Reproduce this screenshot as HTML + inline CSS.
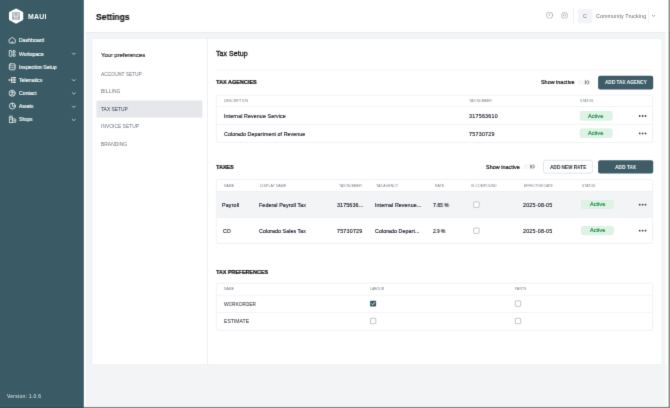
<!DOCTYPE html>
<html lang="en">
<head>
<meta charset="utf-8">
<title>Settings - Tax Setup</title>
<style>
*{box-sizing:border-box;margin:0;padding:0}
html,body{width:670px;height:408px;overflow:hidden;background:#f3f4f6;font-family:"Liberation Sans",Arial,sans-serif;color:#1f2937}
#app{position:relative;width:670px;height:408px;overflow:hidden;background:#f3f4f6}
#app>*{position:absolute}
#gfx{left:0;top:0}
#app{filter:url(#soft)}
.t{white-space:pre;z-index:5;will-change:transform}
</style>
</head>
<body>
<svg width="0" height="0" style="position:absolute"><filter id="soft" x="0" y="0" width="100%" height="100%" color-interpolation-filters="sRGB"><feConvolveMatrix order="3" kernelMatrix="0 1 0 1 7 1 0 1 0" divisor="11" edgeMode="duplicate" preserveAlpha="true"/></filter></svg>
<div id="app">
<svg id="gfx" width="670" height="408" viewBox="0 0 670 408">
  <!-- page background -->
  <rect x="0" y="0" width="670" height="408" fill="#f3f4f6"/>
  <!-- top bar -->
  <rect x="83.8" y="0" width="586.2" height="32.3" fill="#ffffff"/>
  <rect x="83.8" y="32.2" width="586.2" height=".7" fill="#e4e6ea"/>
  <!-- sidebar -->
  <rect x="83.800" y="0" width="1.900" height="406.900" fill="#ffffff"/>
  <rect x="0" y="0" width="83.8" height="408" fill="#3a5b65"/>
  <!-- card -->
  <rect x="92" y="38.5" width="569.8" height="326" rx="1.8" fill="#ffffff" stroke="#e8eaed" stroke-width=".5"/>
  <rect x="207.2" y="38.5" width=".65" height="326" fill="#e6e8eb"/>
  <!-- selected menu item -->
  <rect x="96.4" y="100.4" width="106" height="17.2" rx="1.5" fill="#e5e7eb"/>
  <!-- divider under Tax Setup -->
  <rect x="216" y="69.8" width="437" height=".6" fill="#eef0f2"/>

  <!-- table 1 -->
  <rect x="216.3" y="95.3" width="436.4" height="47.1" rx="1.8" fill="#ffffff" stroke="#e8eaed" stroke-width=".6"/>
  <rect x="216.6" y="106.4" width="435.8" height=".6" fill="#eceef1"/>
  <rect x="216.6" y="124.1" width="435.8" height=".6" fill="#eceef1"/>

  <!-- table 2 -->
  <rect x="216.3" y="179.6" width="436.4" height="63.9" rx="1.8" fill="#ffffff" stroke="#e8eaed" stroke-width=".6"/>
  <rect x="216.6" y="191.1" width="435.8" height="26.3" fill="#f3f4f6"/>
  <rect x="216.6" y="190.9" width="435.8" height=".6" fill="#eceef1"/>
  <rect x="216.6" y="217.2" width="435.8" height=".6" fill="#eceef1"/>

  <!-- table 3 -->
  <rect x="216.3" y="283.2" width="436.4" height="47" rx="1.8" fill="#ffffff" stroke="#e8eaed" stroke-width=".6"/>
  <rect x="216.6" y="294.8" width="435.8" height=".6" fill="#eceef1"/>
  <rect x="216.6" y="312.3" width="435.8" height=".6" fill="#eceef1"/>

  <!-- buttons -->
  <rect x="598.1" y="75.8" width="55.1" height="13.6" rx="2" fill="#3e5d67"/>
  <rect x="543.5" y="160.3" width="48.9" height="12.9" rx="2" fill="#ffffff" stroke="#cfd7da" stroke-width=".6"/>
  <rect x="598.1" y="160.2" width="55.1" height="13.4" rx="2" fill="#3e5d67"/>

  <!-- badges -->
  <rect x="579.7" y="111.0" width="33" height="9.8" rx="2.4" fill="#dcf3e5"/>
  <rect x="579.7" y="128.3" width="33" height="9.7" rx="2.4" fill="#dcf3e5"/>
  <rect x="580.9" y="200.1" width="33" height="9.0" rx="2.4" fill="#dcf3e5"/>
  <rect x="580.9" y="226.1" width="33" height="9.1" rx="2.4" fill="#dcf3e5"/>

  <!-- row menus -->
  <g fill="#323a45">
    <circle cx="639.7" cy="116.0" r=".88"/><circle cx="642.6" cy="116.0" r=".88"/><circle cx="645.5" cy="116.0" r=".88"/>
    <circle cx="639.7" cy="133.4" r=".88"/><circle cx="642.6" cy="133.4" r=".88"/><circle cx="645.5" cy="133.4" r=".88"/>
    <circle cx="639.7" cy="204.7" r=".88"/><circle cx="642.6" cy="204.7" r=".88"/><circle cx="645.5" cy="204.7" r=".88"/>
    <circle cx="639.7" cy="230.7" r=".88"/><circle cx="642.6" cy="230.7" r=".88"/><circle cx="645.5" cy="230.7" r=".88"/>
  </g>

  <!-- checkboxes -->
  <g fill="#ffffff" stroke="#a7adb6" stroke-width=".7">
    <rect x="473.700" y="202.000" width="5.400" height="5.400" rx=".7"/>
    <rect x="473.700" y="228.000" width="5.400" height="5.400" rx=".7"/>
    <rect x="370.400" y="318.300" width="5.400" height="5.400" rx=".7"/>
    <rect x="515.300" y="300.900" width="5.400" height="5.400" rx=".7"/>
    <rect x="515.300" y="318.300" width="5.400" height="5.400" rx=".7"/>
  </g>
  <rect x="370.100" y="300.700" width="6" height="5.700" rx=".9" fill="#3a5a64"/>
  <path d="M371.600 303.700 L372.700 304.800 L374.700 302.500" fill="none" stroke="#ffffff" stroke-width=".85" stroke-linecap="round" stroke-linejoin="round"/>

  <!-- toggles -->
  <g id="tg1"><rect x="577.4" y="79.8" width="12.2" height="5" rx="2.5" fill="#f6f7f8"/><path d="M584.9 80.8 A1.5 1.5 0 0 1 584.9 83.8 M584.9 82.3 h1" fill="none" stroke="#4b5563" stroke-width=".8"/><path d="M587.3 80.7 A1.65 1.65 0 0 1 587.3 84.0" fill="none" stroke="#4b5563" stroke-width=".75"/></g>
  <g id="tg2"><rect x="522.7" y="164.1" width="12.2" height="5" rx="2.5" fill="#f6f7f8"/><path d="M530.2 165.1 A1.5 1.5 0 0 1 530.2 168.1 M530.2 166.6 h1" fill="none" stroke="#4b5563" stroke-width=".8"/><path d="M532.6 164.9 A1.65 1.65 0 0 1 532.6 168.2" fill="none" stroke="#4b5563" stroke-width=".75"/></g>

  <!-- top bar right -->
  <svg x="546" y="11.650" width="7.200" height="7.200" viewBox="0 0 24 24" fill="none" stroke="#9499a2" stroke-width="2" stroke-linecap="round"><circle cx="12" cy="12" r="10.600"/><path d="M12.500 7v5.500h-3"/></svg>
  <svg x="560.900" y="11.650" width="7.200" height="7.200" viewBox="0 0 24 24" fill="none" stroke="#9499a2" stroke-width="2" stroke-linejoin="round"><path d="M12 1.500l3 2.400 3.800-.4 1 3.700 3.200 2-1.500 3.500 1.500 3.500-3.200 2-1 3.700-3.800-.4-3 2.400-3-2.400-3.800.4-1-3.700-3.200-2L3.500 12.700 2 9.200l3.200-2 1-3.700 3.800.4z"/><circle cx="12" cy="12" r="3.600"/></svg>
  <rect x="573.300" y="8.200" width=".6" height="15.600" fill="#e5e7eb"/>
  <rect x="577.900" y="8.800" width="14.500" height="14.400" rx="1.800" fill="#f3f4f7"/>
  <rect x="648.200" y="9.400" width=".6" height="13.200" fill="#e5e7eb"/>
  <path d="M652.300 15.300 L653.500 16.500 L654.700 15.300" fill="none" stroke="#6b7280" stroke-width=".6" stroke-linecap="round" stroke-linejoin="round"/>

  <!-- sidebar logo -->
  <path d="M16.100 9.900 L21.900 13.050 V19.100 L16.100 22.250 L10.300 19.100 V13.050 Z" fill="#ffffff" stroke="#ffffff" stroke-width="2.700" stroke-linejoin="round"/>
  <rect x="12.200" y="12.300" width="7.600" height="7.500" rx=".7" fill="#97a5aa"/>
  <path d="M13.400 13.700 h1.700 v1.700 h-1.700 z M16.900 13.700 h1.700 v1.700 h-1.700 z M13.300 16.600 h5.400 M14.500 16.600 v2.400 M16 16.600 v3 M17.500 16.600 v2.400" stroke="#ffffff" stroke-width=".6" fill="none"/>
  <!-- sidebar icons -->
  <g fill="none" stroke="#f3f7f8" stroke-width=".8" stroke-linejoin="round" stroke-linecap="round">
    <!-- dashboard -->
    <path d="M9.200 39.600 L12.250 37.400 L15.300 39.600 V42.300 Q15.300 43 14.600 43 H9.900 Q9.200 43 9.200 42.300 Z"/><path d="M12.250 42.800 v-1.300"/>
    <!-- workspace -->
    <rect x="9.300" y="50.700" width="2.500" height="5.600" rx=".5"/><rect x="13" y="50.700" width="2.200" height="2.100" rx=".5"/><rect x="13" y="54.200" width="2.200" height="2.100" rx=".5"/>
    <!-- inspection setup -->
    <rect x="9.300" y="63.800" width="5.900" height="6" rx="1.100"/><path d="M9.600 65.800 h5.300 M9.600 67.800 h5.300" stroke-width=".65"/>
    <!-- telematics -->
    <path d="M9.200 80 h2.500 M11.700 77.700 v4.600 M11.700 77.700 h1.200 M11.700 80 h1.200 M11.700 82.300 h1.200 M9.200 79.300 v1.400"/>
    <g fill="#f3f7f8" stroke="none"><rect x="13.300" y="77" width="2.300" height="1.400" rx=".2"/><rect x="13.300" y="79.300" width="2.300" height="1.400" rx=".2"/><rect x="13.300" y="81.600" width="2.300" height="1.400" rx=".2"/></g>
    <!-- contact -->
    <circle cx="12.150" cy="93.200" r="3.050"/><circle cx="12.150" cy="92.400" r="1"/><path d="M10.200 95.350 Q12.150 93.300 14.100 95.350"/>
    <!-- assets -->
    <circle cx="12.400" cy="106" r="3"/><path d="M12.400 103.200 V106.200 H15.200"/>
    <!-- shops -->
    <path d="M9.400 122.200 V116.600 Q9.400 116.100 9.900 116.100 H11.900 Q12.400 116.100 12.400 116.600 V122.200 Z"/><path d="M12.400 118.900 H15.200 Q15.700 118.900 15.700 119.400 V122.200 H12.400"/><path d="M10.500 117.600 h.8 M10.500 119.200 h.8 M13.800 120.500 h.6"/>
  </g>
  <!-- chevrons -->
  <g fill="none" stroke="#e6edef" stroke-width=".75" stroke-linecap="round" stroke-linejoin="round">
    <path d="M72.400 53.100 l1.400 1.400 l1.400 -1.400"/>
    <path d="M72.400 79.600 l1.400 1.400 l1.400 -1.400"/>
    <path d="M72.400 92.800 l1.400 1.400 l1.400 -1.400"/>
    <path d="M72.400 106.100 l1.400 1.400 l1.400 -1.400"/>
    <path d="M72.400 119.300 l1.400 1.400 l1.400 -1.400"/>
  </g>

  <!-- window edge -->
  <rect x="665.600" y="0" width="3" height="365" fill="#ffffff"/>
  <rect x="665.600" y="365" width="3" height="41.900" fill="#f8f9fa"/>
  <rect x="667.700" y="365" width=".9" height="41.900" fill="#ffffff"/>
  <rect x="83.800" y="406" width="584.100" height=".9" fill="#ffffff" opacity=".75"/>
  <rect x="668.600" y="0" width="1.400" height="408" fill="#000000" opacity=".45"/>
  <rect x="83.800" y="406.900" width="585" height="1.100" fill="#000000" opacity=".45"/>
  <rect x="0" y="406.900" width="83.800" height="1.100" fill="#000000" opacity=".1"/>
</svg>

<div class="t" style="left:28.00px;top:11.00px;font-size:6.9px;line-height:11.04px;font-weight:700;color:#ffffff;letter-spacing:0.297px;">MAUI</div>
<div class="t" style="left:18.90px;top:36.00px;font-size:5.2px;line-height:8.32px;font-weight:400;color:#f2f6f7;transform:scaleX(0.9886);transform-origin:0 0;-webkit-text-stroke:.18px #f2f6f7;">Dashboard</div>
<div class="t" style="left:18.90px;top:50.00px;font-size:5.2px;line-height:8.32px;font-weight:400;color:#f2f6f7;transform:scaleX(0.9474);transform-origin:0 0;-webkit-text-stroke:.18px #f2f6f7;">Workspace</div>
<div class="t" style="left:18.90px;top:63.00px;font-size:5.2px;line-height:8.32px;font-weight:400;color:#f2f6f7;transform:scaleX(0.9727);transform-origin:0 0;-webkit-text-stroke:.18px #f2f6f7;">Inspection Setup</div>
<div class="t" style="left:18.90px;top:76.00px;font-size:5.2px;line-height:8.32px;font-weight:400;color:#f2f6f7;transform:scaleX(0.9463);transform-origin:0 0;-webkit-text-stroke:.18px #f2f6f7;">Telematics</div>
<div class="t" style="left:18.90px;top:89.00px;font-size:5.2px;line-height:8.32px;font-weight:400;color:#f2f6f7;transform:scaleX(0.9782);transform-origin:0 0;-webkit-text-stroke:.18px #f2f6f7;">Contact</div>
<div class="t" style="left:18.90px;top:102.00px;font-size:5.2px;line-height:8.32px;font-weight:400;color:#f2f6f7;transform:scaleX(0.9115);transform-origin:0 0;-webkit-text-stroke:.18px #f2f6f7;">Assets</div>
<div class="t" style="left:18.90px;top:115.00px;font-size:5.2px;line-height:8.32px;font-weight:400;color:#f2f6f7;transform:scaleX(0.9172);transform-origin:0 0;-webkit-text-stroke:.18px #f2f6f7;">Shops</div>
<div class="t" style="left:7.00px;top:392.00px;font-size:5.0px;line-height:8.0px;font-weight:400;color:#e3eaec;letter-spacing:0.263px;">Version: 1.0.6</div>
<div class="t" style="left:96.00px;top:11.00px;font-size:8.7px;line-height:13.92px;font-weight:700;color:#0c0d10;transform:scaleX(0.9772);transform-origin:0 0;-webkit-text-stroke:.15px #0c0d10;">Settings</div>
<div class="t" style="left:583.40px;top:12.00px;font-size:5.2px;line-height:8.32px;font-weight:400;color:#6b7280;transform:scaleX(0.9067);transform-origin:0 0;">C</div>
<div class="t" style="left:595.70px;top:12.00px;font-size:5.3px;line-height:8.48px;font-weight:400;color:#626a76;letter-spacing:0.107px;">Community Trucking</div>
<div class="t" style="left:101.00px;top:50.00px;font-size:6.1px;line-height:9.76px;font-weight:400;color:#1a1d22;transform:scaleX(0.9548);transform-origin:0 0;-webkit-text-stroke:.14px #1a1d22;">Your preferences</div>
<div class="t" style="left:100.90px;top:71.00px;font-size:4.9px;line-height:7.84px;font-weight:400;color:#6b7280;transform:scaleX(0.9745);transform-origin:0 0;">ACCOUNT SETUP</div>
<div class="t" style="left:100.90px;top:88.00px;font-size:4.9px;line-height:7.84px;font-weight:400;color:#6b7280;letter-spacing:0.106px;">BILLING</div>
<div class="t" style="left:100.90px;top:106.00px;font-size:4.9px;line-height:7.84px;font-weight:400;color:#374151;transform:scaleX(0.9883);transform-origin:0 0;">TAX SETUP</div>
<div class="t" style="left:100.90px;top:123.00px;font-size:4.9px;line-height:7.84px;font-weight:400;color:#6b7280;letter-spacing:0.018px;">INVOICE SETUP</div>
<div class="t" style="left:100.90px;top:141.00px;font-size:4.9px;line-height:7.84px;font-weight:400;color:#6b7280;letter-spacing:0.039px;">BRANDING</div>
<div class="t" style="left:216.30px;top:48.00px;font-size:7.0px;line-height:11.2px;font-weight:400;color:#15171c;letter-spacing:0.070px;-webkit-text-stroke:.3px #15171c;">Tax Setup</div>
<div class="t" style="left:216.40px;top:78.00px;font-size:5.9px;line-height:9.44px;font-weight:700;color:#050608;transform:scaleX(0.9373);transform-origin:0 0;-webkit-text-stroke:.18px #050608;">TAX AGENCIES</div>
<div class="t" style="left:216.40px;top:163.00px;font-size:5.9px;line-height:9.44px;font-weight:700;color:#050608;transform:scaleX(0.9165);transform-origin:0 0;-webkit-text-stroke:.18px #050608;">TAXES</div>
<div class="t" style="left:216.40px;top:268.00px;font-size:5.9px;line-height:9.44px;font-weight:700;color:#050608;transform:scaleX(0.9095);transform-origin:0 0;-webkit-text-stroke:.18px #050608;">TAX PREFERENCES</div>
<div class="t" style="left:540.90px;top:78.00px;font-size:5.4px;line-height:8.64px;font-weight:400;color:#14161b;letter-spacing:0.028px;-webkit-text-stroke:.2px #14161b;">Show inactive</div>
<div class="t" style="left:486.20px;top:163.00px;font-size:5.4px;line-height:8.64px;font-weight:400;color:#14161b;letter-spacing:0.036px;-webkit-text-stroke:.2px #14161b;">Show inactive</div>
<div class="t" style="left:604.80px;top:78.00px;font-size:5.3px;line-height:8.48px;font-weight:700;color:#ffffff;transform:scaleX(0.8876);transform-origin:0 0;">ADD TAX AGENCY</div>
<div class="t" style="left:549.90px;top:163.00px;font-size:5.3px;line-height:8.48px;font-weight:700;color:#1c222b;transform:scaleX(0.8894);transform-origin:0 0;">ADD NEW RATE</div>
<div class="t" style="left:615.20px;top:163.00px;font-size:5.3px;line-height:8.48px;font-weight:700;color:#ffffff;transform:scaleX(0.9155);transform-origin:0 0;">ADD TAX</div>
<div class="t" style="left:223.90px;top:99.00px;font-size:3.5px;line-height:5.6px;font-weight:400;color:#7a808a;transform:scaleX(0.9991);transform-origin:0 0;">DESCRIPTION</div>
<div class="t" style="left:469.40px;top:99.00px;font-size:3.5px;line-height:5.6px;font-weight:400;color:#7a808a;letter-spacing:0.013px;">TAX NUMBER</div>
<div class="t" style="left:579.90px;top:99.00px;font-size:3.5px;line-height:5.6px;font-weight:400;color:#7a808a;transform:scaleX(0.9702);transform-origin:0 0;">STATUS</div>
<div class="t" style="left:223.90px;top:112.00px;font-size:5.3px;line-height:8.48px;font-weight:400;color:#171c26;letter-spacing:0.101px;-webkit-text-stroke:.14px #171c26;">Internal Revenue Service</div>
<div class="t" style="left:469.40px;top:112.00px;font-size:5.3px;line-height:8.48px;font-weight:400;color:#171c26;letter-spacing:0.273px;-webkit-text-stroke:.14px #171c26;">317563610</div>
<div class="t" style="left:223.90px;top:130.00px;font-size:5.3px;line-height:8.48px;font-weight:400;color:#171c26;letter-spacing:0.072px;-webkit-text-stroke:.14px #171c26;">Colorado Department of Revenue</div>
<div class="t" style="left:469.40px;top:130.00px;font-size:5.3px;line-height:8.48px;font-weight:400;color:#171c26;letter-spacing:0.275px;-webkit-text-stroke:.14px #171c26;">75730729</div>
<div class="t" style="left:223.90px;top:184.00px;font-size:3.5px;line-height:5.6px;font-weight:400;color:#7a808a;transform:scaleX(0.9975);transform-origin:0 0;">NAME</div>
<div class="t" style="left:260.30px;top:184.00px;font-size:3.5px;line-height:5.6px;font-weight:400;color:#7a808a;letter-spacing:0.068px;">DISPLAY NAME</div>
<div class="t" style="left:338.50px;top:184.00px;font-size:3.5px;line-height:5.6px;font-weight:400;color:#7a808a;letter-spacing:0.013px;">TAX NUMBER</div>
<div class="t" style="left:376.40px;top:184.00px;font-size:3.5px;line-height:5.6px;font-weight:400;color:#7a808a;transform:scaleX(0.9860);transform-origin:0 0;">TAX AGENCY</div>
<div class="t" style="left:434.80px;top:184.00px;font-size:3.5px;line-height:5.6px;font-weight:400;color:#7a808a;transform:scaleX(0.9914);transform-origin:0 0;">RATE</div>
<div class="t" style="left:471.10px;top:184.00px;font-size:3.5px;line-height:5.6px;font-weight:400;color:#7a808a;letter-spacing:0.051px;">IS COMPOUND</div>
<div class="t" style="left:524.40px;top:184.00px;font-size:3.5px;line-height:5.6px;font-weight:400;color:#7a808a;transform:scaleX(0.9825);transform-origin:0 0;">EFFECTIVE DATE</div>
<div class="t" style="left:582.30px;top:184.00px;font-size:3.5px;line-height:5.6px;font-weight:400;color:#7a808a;transform:scaleX(0.9777);transform-origin:0 0;">STATUS</div>
<div class="t" style="left:222.40px;top:201.00px;font-size:5.3px;line-height:8.48px;font-weight:400;color:#171c26;letter-spacing:0.166px;-webkit-text-stroke:.14px #171c26;">Payroll</div>
<div class="t" style="left:258.90px;top:201.00px;font-size:5.3px;line-height:8.48px;font-weight:400;color:#171c26;letter-spacing:0.097px;-webkit-text-stroke:.14px #171c26;">Federal Payroll Tax</div>
<div class="t" style="left:336.80px;top:201.00px;font-size:5.3px;line-height:8.48px;font-weight:400;color:#171c26;letter-spacing:0.139px;-webkit-text-stroke:.14px #171c26;">3175636...</div>
<div class="t" style="left:374.70px;top:201.00px;font-size:5.3px;line-height:8.48px;font-weight:400;color:#171c26;letter-spacing:0.085px;-webkit-text-stroke:.14px #171c26;">Internal Revenue...</div>
<div class="t" style="left:433.20px;top:201.00px;font-size:5.3px;line-height:8.48px;font-weight:400;color:#171c26;transform:scaleX(0.9576);transform-origin:0 0;-webkit-text-stroke:.14px #171c26;">7.65 %</div>
<div class="t" style="left:523.00px;top:201.00px;font-size:5.3px;line-height:8.48px;font-weight:400;color:#171c26;letter-spacing:0.232px;-webkit-text-stroke:.14px #171c26;">2025-08-05</div>
<div class="t" style="left:222.60px;top:227.00px;font-size:5.3px;line-height:8.48px;font-weight:400;color:#171c26;transform:scaleX(0.9807);transform-origin:0 0;-webkit-text-stroke:.14px #171c26;">CO</div>
<div class="t" style="left:258.90px;top:227.00px;font-size:5.3px;line-height:8.48px;font-weight:400;color:#171c26;letter-spacing:0.068px;-webkit-text-stroke:.14px #171c26;">Colorado Sales Tax</div>
<div class="t" style="left:336.80px;top:227.00px;font-size:5.3px;line-height:8.48px;font-weight:400;color:#171c26;letter-spacing:0.232px;-webkit-text-stroke:.14px #171c26;">75730729</div>
<div class="t" style="left:374.70px;top:227.00px;font-size:5.3px;line-height:8.48px;font-weight:400;color:#171c26;letter-spacing:0.072px;-webkit-text-stroke:.14px #171c26;">Colorado Depart...</div>
<div class="t" style="left:433.20px;top:227.00px;font-size:5.3px;line-height:8.48px;font-weight:400;color:#171c26;transform:scaleX(0.9080);transform-origin:0 0;-webkit-text-stroke:.14px #171c26;">2.9 %</div>
<div class="t" style="left:523.00px;top:227.00px;font-size:5.3px;line-height:8.48px;font-weight:400;color:#171c26;letter-spacing:0.232px;-webkit-text-stroke:.14px #171c26;">2025-08-05</div>
<div class="t" style="left:223.90px;top:287.00px;font-size:3.5px;line-height:5.6px;font-weight:400;color:#7a808a;transform:scaleX(0.9975);transform-origin:0 0;">NAME</div>
<div class="t" style="left:369.80px;top:287.00px;font-size:3.5px;line-height:5.6px;font-weight:400;color:#7a808a;transform:scaleX(0.9926);transform-origin:0 0;">LABOUR</div>
<div class="t" style="left:514.60px;top:287.00px;font-size:3.5px;line-height:5.6px;font-weight:400;color:#7a808a;letter-spacing:0.010px;">PARTS</div>
<div class="t" style="left:224.10px;top:300.00px;font-size:5.1px;line-height:8.16px;font-weight:400;color:#242b36;transform:scaleX(0.9314);transform-origin:0 0;">WORKORDER</div>
<div class="t" style="left:224.10px;top:317.00px;font-size:5.1px;line-height:8.16px;font-weight:400;color:#242b36;transform:scaleX(0.9963);transform-origin:0 0;">ESTIMATE</div>
<div class="t" style="left:588.40px;top:112.00px;font-size:5.5px;line-height:8.8px;font-weight:400;color:#2a8c4f;letter-spacing:0.043px;-webkit-text-stroke:.22px #2a8c4f;">Active</div>
<div class="t" style="left:588.40px;top:129.00px;font-size:5.5px;line-height:8.8px;font-weight:400;color:#2a8c4f;letter-spacing:0.043px;-webkit-text-stroke:.22px #2a8c4f;">Active</div>
<div class="t" style="left:589.80px;top:200.00px;font-size:5.5px;line-height:8.8px;font-weight:400;color:#2a8c4f;letter-spacing:0.043px;-webkit-text-stroke:.22px #2a8c4f;">Active</div>
<div class="t" style="left:589.80px;top:226.00px;font-size:5.5px;line-height:8.8px;font-weight:400;color:#2a8c4f;letter-spacing:0.043px;-webkit-text-stroke:.22px #2a8c4f;">Active</div>

</div>
</body>
</html>
